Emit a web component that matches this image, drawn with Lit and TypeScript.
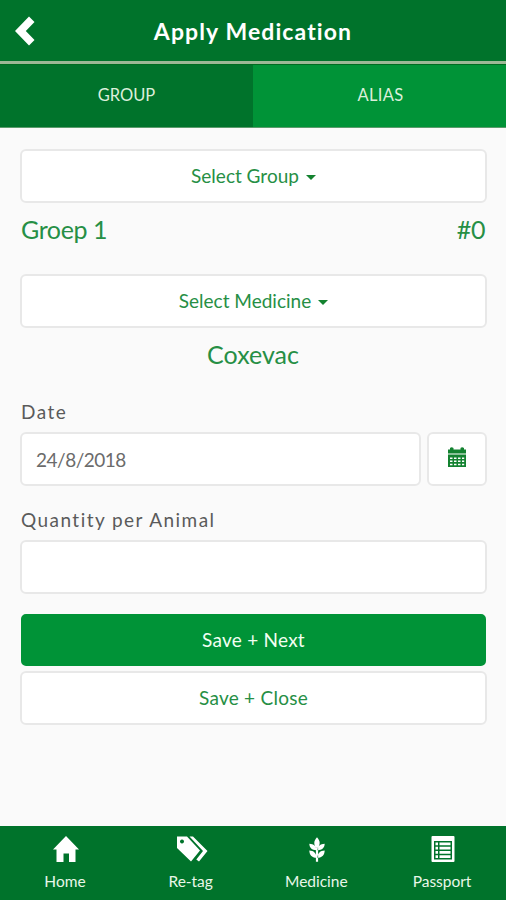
import { LitElement, html, css, svg } from "lit";
import { customElement } from "lit/decorators.js";

const icons = {
  home: svg`<path d="M14 1 L27 14.5 H23.5 V27 H17 V18.5 H11.5 V27 H4.5 V14.5 H1 Z"/>`,
  tags: svg`<path fill-rule="evenodd" d="M1 1.5 H11 L24 15.5 L15 26.5 L1 13 Z M6 4.4 a2 2 0 1 0 .01 0 Z"/><path d="M13.5 1.5 H17 L31.5 16 L23 26.5 L20.3 24.5 L27 16 Z"/>`,
  wheat: svg`<path d="M14 2.2 C17.6 6 17.6 10 14 13.5 C10.4 10 10.4 6 14 2.2 Z M6.3 8.8 C10.8 9.1 13.2 11 13.5 15.2 C8.8 15 6.5 13 6.3 8.8 Z M21.7 8.8 C17.2 9.1 14.8 11 14.5 15.2 C19.2 15 21.5 13 21.7 8.8 Z M6.3 15.4 C10.8 15.6 13.3 17.8 13.6 22.8 C8.6 22.3 6.5 20 6.3 15.4 Z M21.7 15.4 C17.2 15.6 14.7 17.8 14.4 22.8 C19.4 22.3 21.5 20 21.7 15.4 Z M12.9 13 H15.1 V26.8 H12.9 Z"/>`,
  list: svg`<path fill-rule="evenodd" d="M3.5 1 H24.5 Q25.5 1 25.5 2 V26 Q25.5 27 24.5 27 H3.5 Q2.5 27 2.5 26 V2 Q2.5 1 3.5 1 Z M5 6 V24.5 H23 V6 Z"/><path d="M6.5 7.5 H9 V10.3 H6.5 Z M10.5 7.5 H21.5 V10.3 H10.5 Z M6.5 11.8 H9 V14.6 H6.5 Z M10.5 11.8 H21.5 V14.6 H10.5 Z M6.5 16 H9 V18.8 H6.5 Z M10.5 16 H21.5 V18.8 H10.5 Z M6.5 20.2 H9 V23 H6.5 Z M10.5 20.2 H21.5 V23 H10.5 Z"/>`,
};

@customElement("app-root")
export class AppRoot extends LitElement {
  static styles = css`
    :host {
      display: flex;
      flex-direction: column;
      box-sizing: border-box;
      width: 506px;
      height: 900px;
      background: #fafafa;
      color: #5a5a5a;
      font-family: Lato, "Open Sans", sans-serif;
      overflow: hidden;
    }
    * { box-sizing: border-box; }
    svg { display: block; flex: none; }
    header {
      display: grid;
      grid-template-columns: 60px 1fr 60px;
      align-items: center;
      height: 64px;
      background: #00732b;
      border-bottom: 3px solid #9db896;
      color: #fff;
    }
    .back { margin-left: 15px; fill: #fff; }
    h1 {
      margin: 0;
      text-align: center;
      font-size: 23px;
      line-height: 30px;
      font-weight: 700;
      letter-spacing: 1.1px;
      white-space: nowrap;
    }
    .tabs {
      display: grid;
      grid-template-columns: 1fr 1fr;
      height: 64px;
      border-bottom: 1px solid #5c9b6c;
      color: #dcefdb;
      font-size: 16.5px;
    }
    .tab { display: flex; align-items: center; justify-content: center; padding-bottom: 3px; background: #009337; border-top: 1px solid #006b20; }
    .tab.active { background: #00732b; }
    .alias { letter-spacing: .3px; margin-left: 2px; }
    main { flex: 1; display: flex; flex-direction: column; padding: 21px 19px 0 20px; }
    .box {
      display: flex;
      align-items: center;
      justify-content: center;
      height: 54px;
      flex: none;
      padding-bottom: 2px;
      border: 2px solid #e8e8e8;
      border-radius: 6px;
      background: #fff;
      color: #268f45;
      font-size: 19px;
      letter-spacing: 0;
    }
    .caret {
      width: 0;
      height: 0;
      margin: 4px 0 0 7px;
      border: 5.5px solid transparent;
      border-top-color: #13822f;
      border-bottom: 0;
    }
    .value {
      display: flex;
      justify-content: space-between;
      height: 71px;
      flex: none;
      padding: 9px 2px 0 1px;
      line-height: 34px;
      font-size: 25px;
      letter-spacing: -0.4px;
      color: #268f45;
    }
    .center { justify-content: center; height: 72px; letter-spacing: 0; }
    label { height: 32px; flex: none; padding-left: 1px; line-height: 24px; font-size: 19px; letter-spacing: 1.45px; }
    .date { display: grid; grid-template-columns: 401px 60px; justify-content: space-between; margin-bottom: 22px; }
    .field { justify-content: flex-start; padding: 0 0 0 14px; color: #6b6b6b; letter-spacing: -.5px; }
    .quantity { margin-bottom: 20px; }
    .primary { height: 52px; margin: 0 1px 5px; padding-bottom: 1px; border-radius: 5px; background: #009337; border-color: #009337; color: #f2fff2; }
    .save { letter-spacing: .25px; }
    .cal { fill: #138230; margin: -1px 0 0 -1px; }
    nav {
      display: grid;
      grid-template-columns: repeat(4, 125.7px);
      justify-content: center;
      height: 74px;
      flex: none;
      padding-left: 1px;
      background: #00732b;
      color: #e9f7e9;
    }
    .item { display: flex; flex-direction: column; align-items: center; padding-top: 9px; font-size: 15.5px; line-height: 20px; gap: 8px; letter-spacing: -.02px; }
    .item svg { fill: #fff; margin-left: 2px; }
  `;

  private navItem(label: string, icon: unknown, width = 28) {
    return html`<div class="item"><svg width=${width} height="28" viewBox="0 0 ${width} 28">${icon}</svg><span>${label}</span></div>`;
  }

  render() {
    return html`
      <header>
        <svg class="back" width="20" height="30" viewBox="0 0 20 30"><path d="M14 0.5 L19.5 6 L10.8 15 L19.5 24 L14 29.5 L0 15 Z"/></svg>
        <h1>Apply Medication</h1>
      </header>
      <div class="tabs"><div class="tab active"><span>GROUP</span></div><div class="tab"><span class="alias">ALIAS</span></div></div>
      <main>
        <div class="box"><span>Select Group</span><i class="caret"></i></div>
        <div class="value"><span>Groep 1</span><span>#0</span></div>
        <div class="box"><span>Select Medicine</span><i class="caret"></i></div>
        <div class="value center"><span>Coxevac</span></div>
        <label><span>Date</span></label>
        <div class="date">
          <div class="box field"><span>24/8/2018</span></div>
          <div class="box"><svg class="cal" width="18" height="21" viewBox="0 0 18 21"><path fill-rule="evenodd" d="M0 2.5 H2 V1 Q3.5 -.7 5.5 1 V2.5 H12.5 V1 Q14 -.7 16 1 V2.5 H18 V6.4 H0 Z M0 7.4 H18 V20 H0 Z M2 10.5 V12 H4.5 V10.5 Z M6 10.5 V12 H8.5 V10.5 Z M10 10.5 V12 H12.5 V10.5 Z M14 10.5 V12 H16.2 V10.5 Z M2 13.5 V15 H4.5 V13.5 Z M6 13.5 V15 H8.5 V13.5 Z M10 13.5 V15 H12.5 V13.5 Z M14 13.5 V15 H16.2 V13.5 Z M2 16.7 V18.3 H4.5 V16.7 Z M6 16.7 V18.3 H8.5 V16.7 Z M10 16.7 V18.3 H12.5 V16.7 Z M14 16.7 V18.3 H16.2 V16.7 Z"/></svg></div>
        </div>
        <label><span>Quantity per Animal</span></label>
        <div class="box quantity"></div>
        <div class="box primary save"><span>Save + Next</span></div>
        <div class="box save"><span>Save + Close</span></div>
      </main>
      <nav>
        ${this.navItem("Home", icons.home)}
        ${this.navItem("Re-tag", icons.tags, 32)}
        ${this.navItem("Medicine", icons.wheat)}
        ${this.navItem("Passport", icons.list)}
      </nav>
    `;
  }
}
